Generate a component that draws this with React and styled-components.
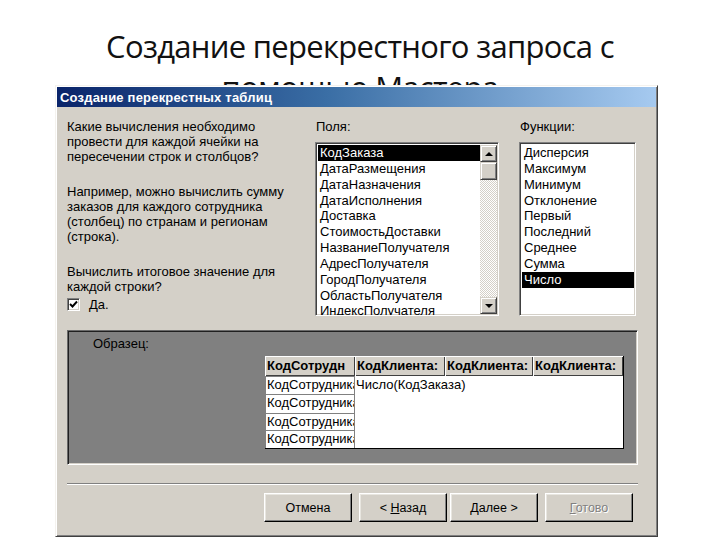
import styled, { createGlobalStyle } from 'styled-components';

const GlobalStyle = createGlobalStyle`
  html, body {
    margin: 0;
    padding: 0;
    background: #ffffff;
  }
  #root {
    width: 720px;
    height: 540px;
    overflow: hidden;
  }
`;

const ui = `"Liberation Sans", Arial, sans-serif`;

const Slide = styled.div`
  width: 720px;
  height: 540px;
  overflow: hidden;
  background: #ffffff;
  padding-top: 26px;
  box-sizing: border-box;
`;

const SlideTitle = styled.h1`
  margin: 0;
  font-family: "Open Sans", sans-serif;
  font-weight: 400;
  font-size: 31px;
  line-height: 41px;
  letter-spacing: -0.7px;
  text-align: center;
  color: #111111;
`;

/* окно мастера */
const Window = styled.div`
  position: relative;
  margin: -23px 0 0 55px;
  width: 603px;
  height: 452px;
  box-sizing: border-box;
  padding: 1px;
  background: #d4d0c8;
  border: 1px solid;
  border-color: #f4f2ee #404040 #404040 #f4f2ee;
  box-shadow: inset 1px 1px #ffffff, inset -1px -1px #808080;
  font-family: ${ui};
  font-size: 13px;
  color: #000;
`;

const TitleBar = styled.div`
  height: 20px;
  display: flex;
  align-items: center;
  padding-left: 3px;
  background: linear-gradient(to right, #0a246a 0%, #3a6ea5 45%, #a6caf0 100%);
  color: #ffffff;
  font-weight: bold;
  font-size: 13px;
  letter-spacing: 0.2px;
`;

const Content = styled.div`
  padding: 12px 18px 0 10px;
`;

const TopSection = styled.div`
  display: flex;
`;

const TextColumn = styled.div`
  width: 248px;
  line-height: 15px;
`;

const Para = styled.p`
  margin: 0 0 20px;
`;

const CheckRow = styled.label`
  display: flex;
  align-items: center;
  gap: 9px;
  margin-top: -18px;
  height: 16px;
`;

const CheckBox = styled.span`
  width: 13px;
  height: 13px;
  box-sizing: border-box;
  background: #fff;
  border: 1px solid;
  border-color: #808080 #ffffff #ffffff #808080;
  box-shadow: inset 1px 1px #404040, inset -1px -1px #d4d0c8;
  display: flex;
  align-items: center;
  justify-content: center;
`;

const Mnemonic = styled.span`
  text-decoration: underline;
`;

const ListColumn = styled.div`
  width: ${(p) => p.$width}px;
  margin-right: ${(p) => p.$gap || 0}px;
  display: flex;
  flex-direction: column;
`;

const Caption = styled.div`
  line-height: 15px;
  margin: 0 0 8px 1px;
`;

const ListBox = styled.div`
  height: 174px;
  box-sizing: border-box;
  background: #ffffff;
  border: 1px solid;
  border-color: #808080 #ffffff #ffffff #808080;
  box-shadow: inset 1px 1px #404040, inset -1px -1px #d4d0c8;
  padding: 2px 1px 1px 2px;
  display: flex;
  overflow: hidden;
`;

const Items = styled.div`
  flex: 1;
  min-width: 0;
`;

const Item = styled.div`
  height: 15.85px;
  line-height: 15.85px;
  padding-left: 2px;
  white-space: nowrap;
  overflow: hidden;
  background: ${(p) => (p.$selected ? '#000000' : 'transparent')};
  color: ${(p) => (p.$selected ? '#ffffff' : '#000000')};
`;

const ScrollBar = styled.div`
  width: 17px;
  display: flex;
  flex-direction: column;
  background-color: #ffffff;
  background-image: repeating-conic-gradient(#d4d0c8 0 25%, #ffffff 0 50%);
  background-size: 2px 2px;
`;

const ScrollButton = styled.div`
  height: 17px;
  box-sizing: border-box;
  background: #d4d0c8;
  border: 1px solid;
  border-color: #d4d0c8 #404040 #404040 #d4d0c8;
  box-shadow: inset 1px 1px #ffffff, inset -1px -1px #808080;
  display: flex;
  align-items: center;
  justify-content: center;
  margin-top: ${(p) => (p.$bottom ? 'auto' : '0')};
`;

const Arrow = styled.span`
  width: 0;
  height: 0;
  border-left: 4px solid transparent;
  border-right: 4px solid transparent;
  border-${(p) => (p.$down ? 'top' : 'bottom')}: 4px solid #000;
`;

const Thumb = styled(ScrollButton)`
  height: 18px;
`;

/* образец */
const SamplePanel = styled.div`
  margin-top: 14px;
  height: 135px;
  box-sizing: border-box;
  background: #808080;
  border: 1px solid;
  border-color: #6a6a6a #ffffff #ffffff #6a6a6a;
  box-shadow: inset 1px 1px #202020, inset -1px -1px #d4d0c8;
  padding: 5px 0 0 1px;
`;

const SampleLabel = styled.div`
  line-height: 15px;
  margin-left: 24px;
`;

const Grid = styled.div`
  margin: 5px 0 0 196px;
  display: grid;
  grid-template-columns: 90px 90px 88px 90px;
  grid-template-rows: 20px 18px 19px 17px 18px;
  width: max-content;
  background: #ffffff;
  border-right: 1px solid #000;
  border-bottom: 1px solid #000;
`;

const HeadCell = styled.div`
  background: #d4d0c8;
  box-shadow: inset 1px 1px #ffffff, inset -1px -1px #404040;
  font-weight: bold;
  line-height: 20px;
  padding: 0 2px;
  white-space: nowrap;
  overflow: hidden;
`;

const RowCell = styled.div`
  border-top: 1px solid #808080;
  border-left: 1px solid #808080;
  border-right: 1px solid #808080;
  line-height: 16px;
  padding-left: 1px;
  white-space: nowrap;
  overflow: hidden;
`;

const ValueCell = styled.div`
  grid-column: 2 / 5;
  grid-row: 2 / 6;
  line-height: 16px;
  padding: 1px 0 0 1px;
`;

const Separator = styled.div`
  margin-top: 18px;
  border-top: 1px solid #808080;
  border-bottom: 1px solid #ffffff;
`;

const ButtonRow = styled.div`
  display: flex;
  gap: 7px;
  margin: 8px 0 0 197px;
`;

const ButtonGroup = styled.div`
  display: flex;
  gap: 3px;
`;

const Button = styled.button`
  width: 88px;
  height: 29px;
  box-sizing: border-box;
  background: #d4d0c8;
  border: 1px solid;
  border-color: #ffffff #000000 #000000 #ffffff;
  box-shadow: inset -1px -1px #808080, inset 1px 1px #e8e6e0;
  font-family: ${ui};
  font-size: 12.5px;
  color: ${(p) => (p.disabled ? '#808080' : '#000000')};
  text-shadow: ${(p) => (p.disabled ? '1px 1px #ffffff' : 'none')};
  padding: 0;
`;

const fields = [
  'КодЗаказа',
  'ДатаРазмещения',
  'ДатаНазначения',
  'ДатаИсполнения',
  'Доставка',
  'СтоимостьДоставки',
  'НазваниеПолучателя',
  'АдресПолучателя',
  'ГородПолучателя',
  'ОбластьПолучателя',
  'ИндексПолучателя',
];

const functions = [
  'Дисперсия',
  'Максимум',
  'Минимум',
  'Отклонение',
  'Первый',
  'Последний',
  'Среднее',
  'Сумма',
  'Число',
];

const App = () => (
  <>
    <GlobalStyle />
    <Slide>
      <SlideTitle>
        Создание перекрестного запроса с
        <br />
        помощью Мастера
      </SlideTitle>

      <Window>
        <TitleBar>Создание перекрестных таблиц</TitleBar>
        <Content>
          <TopSection>
            <TextColumn>
              <Para>
                Какие вычисления необходимо
                <br />
                провести для каждой ячейки на
                <br />
                пересечении строк и столбцов?
              </Para>
              <Para>
                Например, можно вычислить сумму
                <br />
                заказов для каждого сотрудника
                <br />
                (столбец) по странам и регионам
                <br />
                (строка).
              </Para>
              <Para>
                Вычислить итоговое значение для
                <br />
                каждой строки?
              </Para>
              <CheckRow>
                <CheckBox>
                  <svg width="9" height="9" viewBox="0 0 9 9">
                    <path d="M1 4 L3.5 6.5 L8 1.5" fill="none" stroke="#000" strokeWidth="1.9" />
                  </svg>
                </CheckBox>
                <span>
                  <Mnemonic>Д</Mnemonic>а.
                </span>
              </CheckRow>
            </TextColumn>

            <ListColumn $width={184} $gap={20}>
              <Caption>Поля:</Caption>
              <ListBox>
                <Items>
                  {fields.map((f, i) => (
                    <Item key={f} $selected={i === 0}>
                      {f}
                    </Item>
                  ))}
                </Items>
                <ScrollBar>
                  <ScrollButton>
                    <Arrow />
                  </ScrollButton>
                  <Thumb />
                  <ScrollButton $bottom>
                    <Arrow $down />
                  </ScrollButton>
                </ScrollBar>
              </ListBox>
            </ListColumn>

            <ListColumn $width={117}>
              <Caption>Функции:</Caption>
              <ListBox>
                <Items>
                  {functions.map((f) => (
                    <Item key={f} $selected={f === 'Число'}>
                      {f}
                    </Item>
                  ))}
                </Items>
              </ListBox>
            </ListColumn>
          </TopSection>

          <SamplePanel>
            <SampleLabel>Образец:</SampleLabel>
            <Grid>
              <HeadCell>КодСотрудн</HeadCell>
              <HeadCell>КодКлиента:</HeadCell>
              <HeadCell>КодКлиента:</HeadCell>
              <HeadCell>КодКлиента:</HeadCell>
              <RowCell>КодСотрудника</RowCell>
              <ValueCell>Число(КодЗаказа)</ValueCell>
              <RowCell>КодСотрудника</RowCell>
              <RowCell>КодСотрудника</RowCell>
              <RowCell>КодСотрудника</RowCell>
            </Grid>
          </SamplePanel>

          <Separator />

          <ButtonRow>
            <Button>Отмена</Button>
            <ButtonGroup>
              <Button>
                &lt; <Mnemonic>Н</Mnemonic>азад
              </Button>
              <Button>
                <Mnemonic>Д</Mnemonic>алее &gt;
              </Button>
            </ButtonGroup>
            <Button disabled>
              <Mnemonic>Г</Mnemonic>отово
            </Button>
          </ButtonRow>
        </Content>
      </Window>
    </Slide>
  </>
);

export default App;
